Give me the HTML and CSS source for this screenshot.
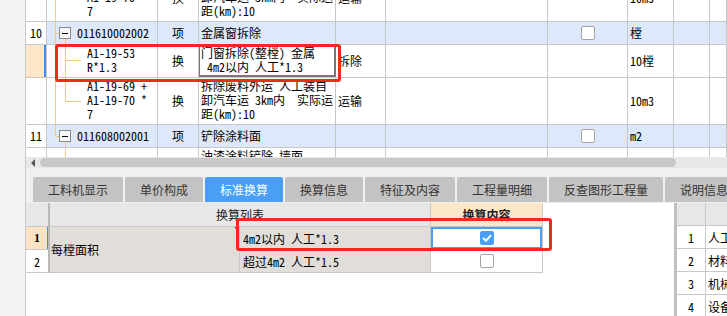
FILE: index.html
```html
<!DOCTYPE html>
<html lang="zh-CN">
<head>
    <meta charset="UTF-8">
    <title>标准换算</title>
    <link rel="stylesheet" href="styles.css">
</head>
<body>
<div class="app">
    <div class="gutter"></div>

    <div class="main">
        <!-- upper grid: bill items and sub items -->
        <div class="grid-view">
            <div class="row r-tail">
                <div class="c num"></div>
                <div class="tree t0"><div class="lines">A1-19-69 +<br>A1-19-70 *<br>7</div></div>
                <div class="c type">换</div>
                <div class="name"><div>拆除废料外运 人工装自<br>卸汽车运 3km内&nbsp; 实际运<br>距(km):10</div></div>
                <div class="c">运输</div>
                <div class="c"></div>
                <div class="c"></div>
                <div class="c">10m3</div>
                <div class="c"></div>
                <div class="c"></div>
            </div>

            <div class="row r-item">
                <div class="c num">10</div>
                <div class="tree t1 head"><span class="minus"></span><span class="code">011610002002</span></div>
                <div class="c type">项</div>
                <div class="c">金属窗拆除</div>
                <div class="c"></div>
                <div class="c"></div>
                <div class="c mid"><span class="cb"></span></div>
                <div class="c">樘</div>
                <div class="c"></div>
                <div class="c"></div>
            </div>

            <div class="row r-sub current">
                <div class="c num"></div>
                <div class="tree t2"><div class="lines">A1-19-53<br>R*1.3</div></div>
                <div class="c type">换</div>
                <div class="name editing"><div>门窗拆除(整樘) 金属<br>&nbsp;4m2以内 人工*1.3</div></div>
                <div class="c">拆除</div>
                <div class="c"></div>
                <div class="c"></div>
                <div class="c">10樘</div>
                <div class="c"></div>
                <div class="c"></div>
            </div>

            <div class="row r-tall">
                <div class="c num"></div>
                <div class="tree t3"><div class="lines">A1-19-69 +<br>A1-19-70 *<br>7</div></div>
                <div class="c type">换</div>
                <div class="name"><div>拆除废料外运 人工装自<br>卸汽车运 3km内&nbsp; 实际运<br>距(km):10</div></div>
                <div class="c">运输</div>
                <div class="c"></div>
                <div class="c"></div>
                <div class="c">10m3</div>
                <div class="c"></div>
                <div class="c"></div>
            </div>

            <div class="row r-item">
                <div class="c num">11</div>
                <div class="tree t4 head"><span class="minus"></span><span class="code">011608002001</span></div>
                <div class="c type">项</div>
                <div class="c">铲除涂料面</div>
                <div class="c"></div>
                <div class="c"></div>
                <div class="c mid"><span class="cb"></span></div>
                <div class="c">m2</div>
                <div class="c"></div>
                <div class="c"></div>
            </div>

            <div class="row r-next">
                <div class="c num"></div>
                <div class="tree t5"></div>
                <div class="c"></div>
                <div class="name"><div>油漆涂料铲除 墙面</div></div>
                <div class="c"></div>
                <div class="c"></div>
                <div class="c"></div>
                <div class="c"></div>
                <div class="c"></div>
                <div class="c"></div>
            </div>
        </div>

        <div class="hscroll">
            <span class="arrow"></span>
            <span class="thumb"></span>
        </div>

        <div class="tabs">
            <div class="tab">工料机显示</div>
            <div class="tab">单价构成</div>
            <div class="tab active">标准换算</div>
            <div class="tab">换算信息</div>
            <div class="tab">特征及内容</div>
            <div class="tab">工程量明细</div>
            <div class="tab">反查图形工程量</div>
            <div class="tab">说明信息</div>
        </div>

        <div class="bottom">
            <div class="left-pane">
                <div class="conv">
                    <div class="h corner"></div>
                    <div class="h list-head">换算列表</div>
                    <div class="h value-head">换算内容</div>

                    <div class="rn first">1</div>
                    <div class="group">每樘面积</div>
                    <div class="opt opt-1">4m2以内 人工*1.3</div>
                    <div class="val val-1 selected"><span class="cb checked"><svg width="10" height="8" viewBox="0 0 10 8"><path d="M1 4 L4 6.8 L9 1.2" fill="none" stroke="#fff" stroke-width="2"/></svg></span></div>

                    <div class="rn second">2</div>
                    <div class="opt opt-2">超过4m2 人工*1.5</div>
                    <div class="val val-2"><span class="cb"></span></div>
                </div>
            </div>
            <div class="split"></div>
            <div class="right-pane">
                <div class="rg">
                    <div class="h"></div><div class="h"></div>
                    <div class="n">1</div><div class="t">人工</div>
                    <div class="n">2</div><div class="t">材料</div>
                    <div class="n">3</div><div class="t">机械</div>
                    <div class="n">4</div><div class="t">设备</div>
                </div>
            </div>
        </div>
    </div>

    <!-- red annotation boxes -->
    <div class="mark mark-top"></div>
    <div class="mark mark-bottom"></div>
</div>
</body>
</html>
```

FILE: styles.css
```css
body {
    margin: 0;
    width: 727px;
    height: 316px;
    overflow: hidden;
    background-color: #f0f0f0;
    font-family: "Noto Sans CJK SC", sans-serif;
    font-size: 12px;
    color: #000;
}

.app {
    position: relative;
    display: flex;
    height: 316px;
}

.gutter {
    width: 25px;
    background-color: #f3f3f3;
    border-right: 1px solid #c9c9c9;
}

.main {
    flex: 1;
    display: flex;
    flex-direction: column;
    min-width: 0;
}

/* ---------- upper grid ---------- */

.grid-view {
    height: 157px;
    overflow: hidden;
    background-color: #fff;
    font-family: "Noto Sans Mono CJK SC", "Noto Sans CJK SC", monospace;
}

.row {
    display: grid;
    grid-template-columns: 21px 111px 41px 137px 50px 162px 80px 46px 36px 1fr;
    border-bottom: 1px solid #c8c8c8;
    box-sizing: border-box;
    line-height: 14px;
}

.row > div {
    border-right: 1px solid #c8c8c8;
    box-sizing: border-box;
    overflow: hidden;
    white-space: nowrap;
}

.r-tail { height: 47px; margin-top: -25px; }
.r-item { height: 23px; background-color: #dde8fb; }
.r-sub { height: 33px; }
.r-tall { height: 47px; }
.r-next { height: 40px; }

.c {
    display: flex;
    align-items: center;
    padding: 0 2px;
}

.c.num {
    padding-left: 4px;
    background-color: #fff;
}

.c.type {
    justify-content: center;
}

.c.mid {
    justify-content: center;
}

.current .num {
    background-color: #fde6c9;
    box-shadow: inset -2px 0 0 #3c8ef0;
}

.name {
    padding: 1px 2px 0;
}

.name.editing {
    border: 1px solid #777;
    border-right-width: 2px;
    border-bottom-width: 2px;
    padding: 0 1px;
}

/* tree connectors */
.tree {
    --tree: #f6c886;
}

.tree.head {
    display: flex;
    align-items: center;
    padding-left: 12px;
}

.tree .lines {
    padding: 1px 0 0 40px;
}

.t0 {
    background: linear-gradient(var(--tree), var(--tree)) 8px 0 / 1px 100% no-repeat;
}

.t1 {
    background:
        linear-gradient(var(--tree), var(--tree)) 8px 0 / 1px 100% no-repeat,
        linear-gradient(var(--tree), var(--tree)) 8px 11px / 4px 1px no-repeat,
        linear-gradient(var(--tree), var(--tree)) 18px 17px / 1px 100% no-repeat;
}

.t2 {
    background:
        linear-gradient(var(--tree), var(--tree)) 8px 0 / 1px 100% no-repeat,
        linear-gradient(var(--tree), var(--tree)) 18px 0 / 1px 100% no-repeat,
        linear-gradient(var(--tree), var(--tree)) 18px 15px / 16px 1px no-repeat;
}

.t3 {
    background:
        linear-gradient(var(--tree), var(--tree)) 8px 0 / 1px 100% no-repeat,
        linear-gradient(var(--tree), var(--tree)) 18px 0 / 1px 24px no-repeat,
        linear-gradient(var(--tree), var(--tree)) 18px 23px / 16px 1px no-repeat;
}

.t4 {
    background:
        linear-gradient(var(--tree), var(--tree)) 8px 0 / 1px 12px no-repeat,
        linear-gradient(var(--tree), var(--tree)) 8px 11px / 4px 1px no-repeat,
        linear-gradient(var(--tree), var(--tree)) 18px 17px / 1px 100% no-repeat;
}

.t5 {
    background: linear-gradient(var(--tree), var(--tree)) 18px 0 / 1px 100% no-repeat;
}

.minus {
    width: 12px;
    height: 12px;
    box-sizing: border-box;
    border: 1px solid #8a8a8a;
    background-color: #f7f7f7;
    display: flex;
    align-items: center;
    justify-content: center;
}

.minus::before {
    content: "";
    width: 6px;
    height: 1px;
    background-color: #000;
}

.code {
    margin-left: 6px;
}

.cb {
    width: 14px;
    height: 14px;
    box-sizing: border-box;
    border: 1px solid #a4a4a4;
    border-radius: 2px;
    background-color: #fff;
    display: flex;
    align-items: center;
    justify-content: center;
}

.cb.checked {
    background-color: #4a9ff5;
    border-color: #4a9ff5;
}

/* ---------- horizontal scrollbar ---------- */

.hscroll {
    height: 11px;
    background-color: #e8e8e8;
    display: flex;
    align-items: center;
}

.arrow {
    width: 0;
    height: 0;
    border-top: 4px solid transparent;
    border-bottom: 4px solid transparent;
    border-right: 4px solid #555;
    margin: 0 5px 0 5px;
}

.thumb {
    width: 636px;
    height: 9px;
    border-radius: 5px;
    background-color: #c8c8c8;
}

/* ---------- tabs ---------- */

.tabs {
    display: flex;
    gap: 2px;
    height: 25px;
    margin: 9px 0 1px;
    padding-left: 7px;
    white-space: nowrap;
}

.tab {
    flex-shrink: 0;
    padding: 0 15px;
    line-height: 25px;
    background-color: #c3c3c3;
    border-radius: 2px 2px 0 0;
    color: #333;
}

.tab.active {
    background-color: #4a9ff5;
    color: #fff;
}

/* ---------- bottom panes ---------- */

.bottom {
    display: flex;
    height: 113px;
}

.left-pane {
    width: 648px;
    background-color: #fff;
}

.split {
    width: 3px;
    background-color: #c0c0c0;
}

.right-pane {
    flex: 1;
    background-color: #fff;
    overflow: hidden;
}

.conv {
    display: grid;
    grid-template-columns: 24px 190px 191px 112px;
    grid-template-rows: 24px 23px 23px;
}

.conv > div {
    box-sizing: border-box;
    border-right: 1px solid #c8c8c8;
    border-bottom: 1px solid #c8c8c8;
    display: flex;
    align-items: center;
    white-space: nowrap;
}

.conv .h {
    grid-row: 1;
    background-color: #e7e7e7;
    justify-content: center;
    color: #222;
}

.conv .corner { grid-column: 1; }
.conv .list-head { grid-column: 2 / 4; }
.conv .value-head { grid-column: 4; }

.conv .corner,
.conv .rn {
    border-right: 2px solid #b8b8b8;
}

.conv .value-head {
    background-color: #fce6c9;
    font-weight: bold;
}

.rn {
    grid-column: 1;
    justify-content: center;
    font-family: "Noto Sans Mono CJK SC", "Noto Sans CJK SC", monospace;
}

.rn.first {
    grid-row: 2;
    background-color: #fde3c3;
    font-family: "Liberation Serif", serif;
    font-weight: bold;
    box-shadow: inset -1px 0 0 #3c8ef0;
}

.rn.second { grid-row: 3; }

.group {
    grid-column: 2;
    grid-row: 2 / 4;
    position: relative;
    background-color: #e1ddd9;
    padding-left: 1px;
    font-family: "Noto Sans Mono CJK SC", "Noto Sans CJK SC", monospace;
}

/* comment marker in the corner of the cell */
.group::after {
    content: "";
    position: absolute;
    top: 0;
    right: 0;
    border-top: 5px solid #b3261e;
    border-left: 5px solid transparent;
}

.opt {
    grid-column: 3;
    background-color: #e1ddd9;
    padding-left: 3px;
    font-family: "Noto Sans Mono CJK SC", "Noto Sans CJK SC", monospace;
}

.opt-1, .val-1 { grid-row: 2; }
.opt-2, .val-2 { grid-row: 3; }

.val {
    grid-column: 4;
    justify-content: center;
    background-color: #fff;
}

.val.selected {
    box-shadow: inset 0 0 0 2px #4a9ff5;
}

.rg {
    display: grid;
    grid-template-columns: 29px 1fr;
    grid-auto-rows: 23px;
    font-family: "Noto Sans Mono CJK SC", "Noto Sans CJK SC", monospace;
}

.rg > div {
    box-sizing: border-box;
    border-right: 1px solid #c8c8c8;
    border-bottom: 1px solid #c8c8c8;
    display: flex;
    align-items: center;
    white-space: nowrap;
}

.rg .h {
    background-color: #e7e7e7;
}

.rg .n {
    justify-content: center;
}

.rg .t {
    padding-left: 2px;
}

/* ---------- red annotation ---------- */

.mark {
    position: absolute;
    box-sizing: border-box;
    border: 3px solid #f5281c;
    border-radius: 3px;
}

.mark-top {
    left: 55px;
    top: 44px;
    width: 286px;
    height: 38px;
}

.mark-bottom {
    left: 236px;
    top: 218px;
    width: 316px;
    height: 33px;
}
```
